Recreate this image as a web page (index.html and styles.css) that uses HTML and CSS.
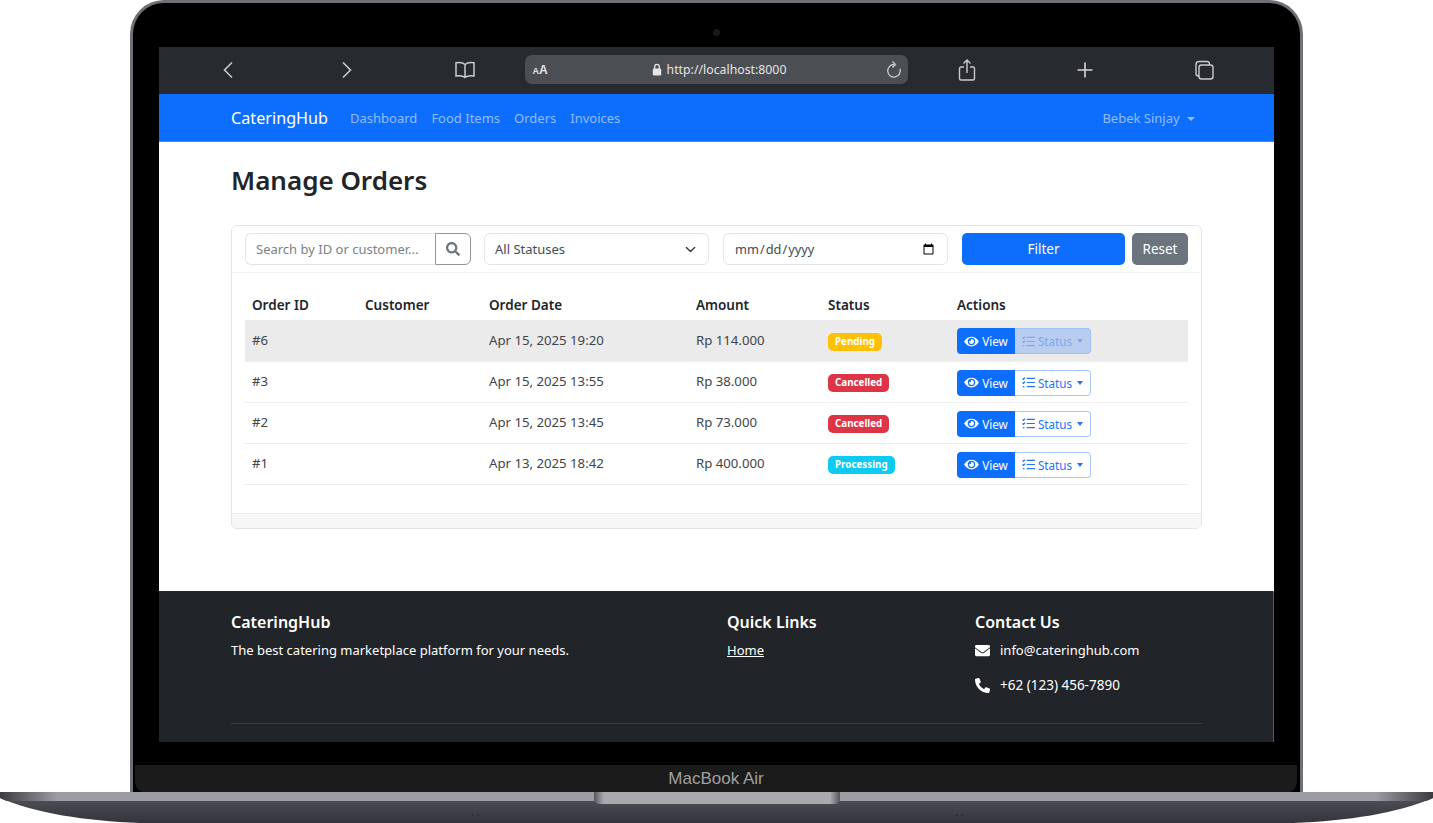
FILE: index.html
```html
<!DOCTYPE html>
<html lang="en">
<head>
    <meta charset="UTF-8">
    <meta name="viewport" content="width=device-width, initial-scale=1.0">
    <title>CateringHub - Manage Orders</title>
    <link rel="stylesheet" href="styles.css">
</head>
<body>
    <svg class="icon-defs" width="0" height="0">
        <symbol id="icon-eye" viewBox="0 0 576 512"><path d="M572.520 241.400C518.290 135.590 410.930 64 288 64S57.680 135.640 3.480 241.410a32.350 32.350 0 0 0 0 29.190C57.710 376.410 165.070 448 288 448s230.320-71.640 284.520-177.410a32.350 32.350 0 0 0 0-29.190zM288 400a144 144 0 1 1 144-144 143.930 143.930 0 0 1-144 144zm0-240a95.310 95.310 0 0 0-25.310 3.790 47.850 47.850 0 0 1-66.900 66.900A95.780 95.780 0 1 0 288 160z"/></symbol>
        <symbol id="icon-tasks" viewBox="0 0 14 12"><path fill="none" stroke="currentColor" stroke-width="1.3" d="M5 1.500h9M5 6h9M5 10.500h9M.5 1.500l1 1L3.300.6M.5 6l1 1 1.800-1.900M.8 10.500h1.700"/></symbol>
    </svg>
    <div class="laptop">
        <div class="lid">
            <div class="bezel-top"><span class="camera"></span></div>
            <div class="screen">
                <div class="browser-bar">
                    <div class="bar-cell">
                        <svg width="12" height="18" viewBox="0 0 12 18" fill="none" stroke="#c9cbcd" stroke-width="1.6"><path d="M10 1.500 2.500 9l7.500 7.500"/></svg>
                    </div>
                    <div class="bar-cell">
                        <svg width="12" height="18" viewBox="0 0 12 18" fill="none" stroke="#c9cbcd" stroke-width="1.6"><path d="M2 1.500 9.500 9 2 16.500"/></svg>
                    </div>
                    <div class="bar-cell">
                        <svg width="22" height="18" viewBox="0 0 22 18" fill="none" stroke="#c9cbcd" stroke-width="1.5"><path d="M11 3.500C9 1.600 5.500 1.200 2 1.800V15c3.500-.6 7-.4 9 1.500 2-1.900 5.500-2.100 9-1.500V1.800C16.500 1.200 13 1.600 11 3.500ZM11 3.500V16.500"/></svg>
                    </div>
                    <div class="url-bar">
                        <span class="url-aa"><small>A</small>A</span>
                        <div class="url-center">
                            <svg width="10" height="13" viewBox="0 0 10 13"><path fill="none" stroke="#e4e5e6" stroke-width="1.3" d="M2.700 6V3.700a2.300 2.300 0 0 1 4.600 0V6"/><rect x="0.8" y="5.500" width="8.400" height="7" rx="1.200" fill="#e4e5e6"/></svg>
                            <span>http://localhost:8000</span>
                        </div>
                        <svg width="16" height="19" viewBox="0 0 16 19" fill="none" stroke="#c9cbcd" stroke-width="1.3"><path d="M8 4.500a6.300 6.300 0 1 0 6 4.300"/><path d="M6.500 1.500 9.500 4.500l-3 3"/></svg>
                    </div>
                    <div class="bar-cell">
                        <svg width="18" height="22" viewBox="0 0 18 22" fill="none" stroke="#c9cbcd" stroke-width="1.4"><path d="M6 8H3a1.500 1.500 0 0 0-1.500 1.500v10A1.500 1.500 0 0 0 3 21h12a1.500 1.500 0 0 0 1.500-1.500v-10A1.500 1.500 0 0 0 15 8h-3M9 14V1M5.500 4.500 9 1l3.500 3.500"/></svg>
                    </div>
                    <div class="bar-cell">
                        <svg width="18" height="18" viewBox="0 0 18 18" stroke="#d5d6d8" stroke-width="1.6"><path d="M9 1.500v15M1.500 9h15"/></svg>
                    </div>
                    <div class="bar-cell">
                        <svg width="20" height="20" viewBox="0 0 20 20" fill="none" stroke="#c9cbcd" stroke-width="1.4"><rect x="5" y="5" width="14" height="14" rx="2.500"/><path d="M5 16h-.5A2.500 2.500 0 0 1 2 13.500v-9A3 3 0 0 1 5 1.500h8A2.500 2.500 0 0 1 15.500 4v1"/></svg>
                    </div>
                </div>

                <nav class="navbar">
                    <a class="brand">CateringHub</a>
                    <a class="nav-link">Dashboard</a>
                    <a class="nav-link">Food Items</a>
                    <a class="nav-link">Orders</a>
                    <a class="nav-link">Invoices</a>
                    <a class="nav-link user-link">Bebek Sinjay <span class="caret caret-light"></span></a>
                </nav>

                <main class="content">
                    <h1>Manage Orders</h1>
                    <div class="card">
                        <div class="card-header">
                            <div class="search-group">
                                <input class="field search-input" type="text" placeholder="Search by ID or customer...">
                                <button class="search-btn">
                                    <svg width="14" height="14" viewBox="0 0 512 512" fill="#6c757d"><path d="M505 442.700L405.300 343c-4.500-4.500-10.600-7-17-7H372c27.600-35.300 44-79.700 44-128C416 93.100 322.900 0 208 0S0 93.100 0 208s93.100 208 208 208c48.300 0 92.700-16.400 128-44v16.300c0 6.400 2.500 12.500 7 17l99.700 99.700c9.400 9.400 24.600 9.400 33.900 0l28.300-28.300c9.400-9.400 9.400-24.600.1-34zM208 336c-70.700 0-128-57.200-128-128 0-70.700 57.200-128 128-128 70.700 0 128 57.200 128 128 0 70.700-57.200 128-128 128z"/></svg>
                                </button>
                            </div>
                            <select class="field status-select"><option>All Statuses</option></select>
                            <input class="field date-input" type="date">
                            <button class="btn-filter">Filter</button>
                            <button class="btn-reset">Reset</button>
                        </div>
                        <div class="card-body">
                            <table class="orders">
                                <thead>
                                    <tr>
                                        <th class="col-id">Order ID</th>
                                        <th class="col-customer">Customer</th>
                                        <th class="col-date">Order Date</th>
                                        <th class="col-amount">Amount</th>
                                        <th class="col-status">Status</th>
                                        <th>Actions</th>
                                    </tr>
                                </thead>
                                <tbody>
                                    <tr class="row-hover">
                                        <td>#6</td><td></td><td>Apr 15, 2025 19:20</td><td>Rp 114.000</td>
                                        <td><span class="badge badge-pending">Pending</span></td>
                                        <td>
                                            <div class="btn-group">
                                                <a class="btn-view"><svg class="eye"><use href="#icon-eye"/></svg>View</a>
                                                <a class="btn-status"><svg class="tasks"><use href="#icon-tasks"/></svg>Status <span class="caret"></span></a>
                                            </div>
                                        </td>
                                    </tr>
                                    <tr>
                                        <td>#3</td><td></td><td>Apr 15, 2025 13:55</td><td>Rp 38.000</td>
                                        <td><span class="badge badge-cancelled">Cancelled</span></td>
                                        <td>
                                            <div class="btn-group">
                                                <a class="btn-view"><svg class="eye"><use href="#icon-eye"/></svg>View</a>
                                                <a class="btn-status"><svg class="tasks"><use href="#icon-tasks"/></svg>Status <span class="caret"></span></a>
                                            </div>
                                        </td>
                                    </tr>
                                    <tr>
                                        <td>#2</td><td></td><td>Apr 15, 2025 13:45</td><td>Rp 73.000</td>
                                        <td><span class="badge badge-cancelled">Cancelled</span></td>
                                        <td>
                                            <div class="btn-group">
                                                <a class="btn-view"><svg class="eye"><use href="#icon-eye"/></svg>View</a>
                                                <a class="btn-status"><svg class="tasks"><use href="#icon-tasks"/></svg>Status <span class="caret"></span></a>
                                            </div>
                                        </td>
                                    </tr>
                                    <tr>
                                        <td>#1</td><td></td><td>Apr 13, 2025 18:42</td><td>Rp 400.000</td>
                                        <td><span class="badge badge-processing">Processing</span></td>
                                        <td>
                                            <div class="btn-group">
                                                <a class="btn-view"><svg class="eye"><use href="#icon-eye"/></svg>View</a>
                                                <a class="btn-status"><svg class="tasks"><use href="#icon-tasks"/></svg>Status <span class="caret"></span></a>
                                            </div>
                                        </td>
                                    </tr>
                                </tbody>
                            </table>
                        </div>
                        <div class="card-footer"></div>
                    </div>
                </main>

                <footer class="footer">
                    <div class="footer-cols">
                        <div>
                            <h5>CateringHub</h5>
                            <p>The best catering marketplace platform for your needs.</p>
                        </div>
                        <div>
                            <h5>Quick Links</h5>
                            <p><a class="footer-link">Home</a></p>
                        </div>
                        <div>
                            <h5>Contact Us</h5>
                            <p class="contact">
                                <svg width="15" height="15" viewBox="0 0 512 512" fill="#fff"><path d="M502.300 190.800c3.900-3.100 9.700-.2 9.700 4.700V400c0 26.500-21.500 48-48 48H48c-26.500 0-48-21.500-48-48V195.600c0-5 5.700-7.800 9.700-4.700 22.400 17.400 52.100 39.500 154.100 113.600 21.100 15.400 56.700 47.800 92.200 47.600 35.700.3 72-32.800 92.300-47.600 102-74.100 131.600-96.300 154-113.700zM256 320c23.200.4 56.600-29.200 73.400-41.400 132.700-96.300 142.800-104.700 173.400-128.700 5.800-4.500 9.200-11.500 9.200-18.900v-19c0-26.500-21.500-48-48-48H48C21.500 64 0 85.500 0 112v19c0 7.400 3.400 14.300 9.200 18.900 30.600 23.900 40.700 32.400 173.400 128.700 16.800 12.200 50.200 41.800 73.400 41.400z"/></svg>
                                info@cateringhub.com
                            </p>
                            <p class="contact phone">
                                <svg width="15" height="15" viewBox="0 0 512 512" fill="#fff"><path d="M497.390 361.800l-112-48a24 24 0 0 0-28 6.900l-49.600 60.600A370.660 370.660 0 0 1 130.600 204.110l60.600-49.600a23.940 23.940 0 0 0 6.900-28l-48-112A24.160 24.160 0 0 0 122.600.61l-104 24A24 24 0 0 0 0 48c0 256.500 207.900 464 464 464a24 24 0 0 0 23.400-18.600l24-104a24.290 24.290 0 0 0-14.010-27.600z"/></svg>
                                +62 (123) 456-7890
                            </p>
                        </div>
                    </div>
                    <hr class="footer-rule">
                </footer>
            </div>
            <div class="chin">MacBook Air</div>
        </div>
        <svg class="base" width="1433" height="31" viewBox="0 0 1433 31">
            <defs>
                <linearGradient id="lower" x1="0" y1="0" x2="0" y2="1">
                    <stop offset="0" stop-color="#55565e"/>
                    <stop offset="1" stop-color="#33343b"/>
                </linearGradient>
                <linearGradient id="upper" x1="0" y1="0" x2="1" y2="0">
                    <stop offset="0" stop-color="#3a3a40"/>
                    <stop offset="0.04" stop-color="#9b9ca4"/>
                    <stop offset="0.96" stop-color="#9b9ca4"/>
                    <stop offset="1" stop-color="#3a3a40"/>
                </linearGradient>
                <linearGradient id="notch" x1="0" y1="0" x2="1" y2="0">
                    <stop offset="0" stop-color="#55565c"/>
                    <stop offset="0.04" stop-color="#a9aaae"/>
                    <stop offset="0.96" stop-color="#a9aaae"/>
                    <stop offset="1" stop-color="#55565c"/>
                </linearGradient>
            </defs>
            <path d="M0 0H1433V6C1398 21 1348 29 1293 31H140C85 29 35 21 0 6Z" fill="url(#lower)"/>
            <path d="M0 0H1433V6C1431 7 1429 8 1426 9H7C4 8 2 7 0 6Z" fill="url(#upper)"/>
            <path d="M594 0H840V7Q840 12 834 12H600Q594 12 594 7Z" fill="url(#notch)"/>
            <g fill="#2e2f35">
                <circle cx="473" cy="23" r="1"/>
                <circle cx="478" cy="23" r="1"/>
                <circle cx="957" cy="23" r="1"/>
                <circle cx="962" cy="23" r="1"/>
            </g>
        </svg>
    </div>
</body>
</html>
```

FILE: styles.css
```css
* {
    box-sizing: border-box;
}

html, body {
    margin: 0;
    height: 100%;
    overflow: hidden;
    background-color: white;
}

body {
    font-family: "Noto Sans", "Open Sans", sans-serif;
    font-size: 13px;
    color: #212529;
}

.icon-defs {
    display: block;
}

.laptop {
    width: 1433px;
}

.lid {
    width: 1173px;
    height: 793px;
    margin-left: 130px;
    background: black;
    border: 3px solid #6f7075;
    border-bottom: none;
    border-radius: 34px 34px 0 0;
    overflow: hidden;
}

.bezel-top {
    height: 44px;
    display: flex;
    justify-content: center;
    align-items: center;
    padding-top: 14px;
}

.camera {
    width: 7px;
    height: 7px;
    border-radius: 50%;
    background: #17181c;
}

.screen {
    width: 1115px;
    height: 695px;
    margin-left: 26px;
    display: flex;
    flex-direction: column;
    background: white;
    overflow: hidden;
}

.browser-bar {
    height: 47px;
    flex-shrink: 0;
    display: flex;
    align-items: center;
    padding: 0 0 2px 10px;
    background: #272b2f;
}

.bar-cell {
    width: 118.5px;
    display: flex;
    justify-content: center;
    align-items: center;
}

.url-bar {
    width: 383px;
    height: 29px;
    display: flex;
    align-items: center;
    padding: 0 6px 0 8px;
    background: #4b4e52;
    border-radius: 7px;
    color: #e4e5e6;
}

.url-aa {
    width: 20px;
    font-family: "Liberation Sans", sans-serif;
    font-size: 12px;
    font-weight: 700;
}

.url-aa small {
    font-size: 9px;
}

.url-center {
    flex: 1;
    display: flex;
    justify-content: center;
    align-items: center;
    gap: 5px;
    font-size: 12.3px;
}

.navbar {
    height: 48px;
    flex-shrink: 0;
    display: flex;
    align-items: center;
    padding: 0 79px 0 72px;
    background: #0d6efd;
    border-bottom: 1px solid #3c8afd;
}

.brand {
    margin-right: 22px;
    font-size: 16.2px;
    color: white;
}

.nav-link {
    margin-right: 14px;
    font-size: 13px;
    color: rgba(255,255,255,0.55);
}

.user-link {
    margin: 0 0 0 auto;
}

.caret {
    display: inline-block;
    margin-left: 4px;
    vertical-align: 2px;
    border-top: 4px solid currentColor;
    border-left: 4px solid transparent;
    border-right: 4px solid transparent;
}

.caret-light {
    border-left-width: 4.5px;
    border-right-width: 4.5px;
}

.content {
    flex: 1;
    padding: 0 72px;
}

h1 {
    margin: 19px 0 26px;
    font-size: 26px;
    line-height: 38px;
    font-weight: 600;
}

.card {
    background: white;
    border: 1px solid #e4e4e4;
    border-radius: 6px;
    overflow: hidden;
}

.card-header {
    display: flex;
    height: 47px;
    padding: 7px 13px 0;
    border-bottom: 1px solid #f2f2f2;
}

.field {
    height: 32px;
    padding: 0 10px;
    font-family: inherit;
    font-size: 13px;
    color: #444b52;
    background-color: white;
    border: 1px solid #e2e4e7;
    border-radius: 6px;
}

.field::placeholder {
    color: #7b8188;
}

.search-group {
    display: flex;
    width: 226px;
    margin-right: 13px;
}

.search-input {
    width: 190px;
    border-right: none;
    border-radius: 6px 0 0 6px;
}

.search-btn {
    width: 36px;
    height: 32px;
    display: flex;
    justify-content: center;
    align-items: center;
    padding: 0;
    background: white;
    border: 1px solid #8f969d;
    border-radius: 0 6px 6px 0;
}

.status-select {
    width: 225px;
    margin-right: 14px;
    appearance: none;
    background-image: url("data:image/svg+xml,%3csvg xmlns='http://www.w3.org/2000/svg' viewBox='0 0 16 16'%3e%3cpath fill='none' stroke='%23343a40' stroke-linecap='round' stroke-linejoin='round' stroke-width='2' d='m2 5 6 6 6-6'/%3e%3c/svg%3e");
    background-repeat: no-repeat;
    background-position: right 12px center;
    background-size: 11px 11px;
}

.date-input {
    width: 225px;
    margin-right: 14px;
    font-size: 12.8px;
}

.btn-filter {
    width: 163px;
    height: 32px;
    margin-right: 7px;
    font-family: inherit;
    font-size: 13.5px;
    color: white;
    background: #0d6efd;
    border: none;
    border-radius: 5px;
}

.btn-reset {
    width: 56px;
    height: 32px;
    padding: 0;
    font-family: inherit;
    font-size: 13.5px;
    color: white;
    background: #6c757d;
    border: none;
    border-radius: 5px;
}

.card-body {
    padding: 14px 13px 28px;
}

.orders {
    width: 943px;
    table-layout: fixed;
    border-collapse: collapse;
}

.orders th {
    height: 33px;
    padding: 2px 7px 0;
    text-align: left;
    font-size: 13.5px;
    font-weight: 600;
    color: #212529;
}

.col-id { width: 113px; }
.col-customer { width: 124px; }
.col-date { width: 207px; }
.col-amount { width: 132px; }
.col-status { width: 129px; }

.orders td {
    height: 41px;
    padding: 0 7px 1px;
    font-size: 13.2px;
    color: #3f454b;
    border-bottom: 1px solid #efefef;
}

.row-hover td {
    background: #ebebeb;
}

.badge {
    display: inline-block;
    height: 18px;
    padding: 0 7px;
    vertical-align: -2px;
    font-size: 9.8px;
    line-height: 18px;
    font-weight: 700;
    color: white;
    border-radius: 5px;
}

.badge-pending { background: #ffc107; }
.badge-cancelled { background: #dc3545; }
.badge-processing { background: #0dcaf0; }

.btn-group {
    display: flex;
    width: 134px;
    height: 26px;
    margin-top: 3px;
    font-size: 11.7px;
}

.btn-view {
    width: 58px;
    display: flex;
    align-items: center;
    justify-content: center;
    gap: 3px;
    color: white;
    background: #0d6efd;
    border-radius: 4px 0 0 4px;
}

.btn-status {
    width: 76px;
    display: flex;
    align-items: center;
    justify-content: center;
    gap: 3px;
    color: #2474f5;
    background: white;
    border: 1.5px solid #a8c9fb;
    border-left: none;
    border-radius: 0 4px 4px 0;
}

.row-hover .btn-status {
    color: #7aa8f0;
    background: #b8cdef;
    border-color: #9ec1f8;
}

.btn-status .caret {
    margin-left: 2px;
    vertical-align: 1px;
    border-left-width: 3.5px;
    border-right-width: 3.5px;
}

.eye {
    width: 15px;
    height: 13px;
    fill: white;
}

.tasks {
    width: 13px;
    height: 11px;
}

.card-footer {
    height: 15px;
    background: #f7f7f7;
    border-top: 1px solid #efefef;
}

.footer {
    height: 151px;
    flex-shrink: 0;
    padding: 20px 71px 0 72px;
    color: white;
    background: #212529;
    border-right: 1px solid #55585c;
}

.footer-cols {
    display: grid;
    grid-template-columns: 496px 248px 1fr;
    height: 112px;
}

h5 {
    margin: 0 0 5px;
    font-size: 16px;
    line-height: 23px;
    font-weight: 600;
}

.footer p {
    margin: 0 0 12px;
    font-size: 13px;
    line-height: 23px;
}

.footer .phone {
    font-size: 13.5px;
}

.footer-link {
    color: white;
    text-decoration: underline;
}

.contact {
    display: flex;
    align-items: center;
    gap: 10px;
}

.footer-rule {
    margin: 0;
    border: none;
    border-top: 1px solid #3c4045;
}

.chin {
    width: 1162px;
    height: 28px;
    margin: 23px 0 0 2px;
    display: flex;
    justify-content: center;
    align-items: center;
    font-family: "Liberation Sans", sans-serif;
    font-size: 17px;
    color: #a0a0a0;
    background: #1b1b1b;
    border-radius: 0 0 12px 12px;
}

.base {
    display: block;
    margin-top: -1px;
}
```
